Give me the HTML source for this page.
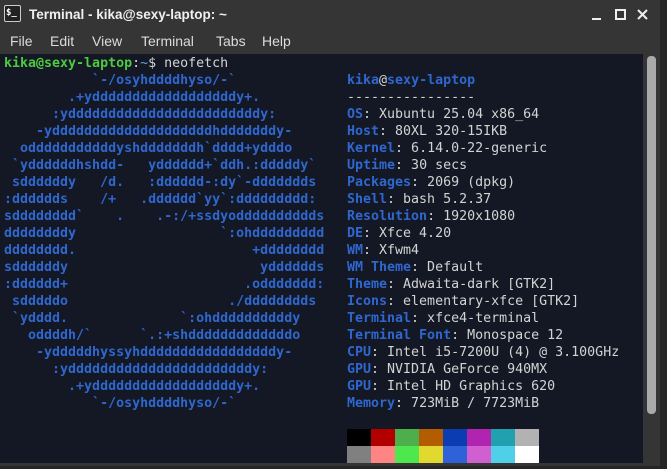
<!DOCTYPE html>
<html><head><meta charset="utf-8"><style>
*{margin:0;padding:0}
body{width:667px;height:469px;background:#353535;position:relative;overflow:hidden;font-family:"Liberation Sans",sans-serif}
#title{position:absolute;left:0;top:0;width:661px;height:30px;background:#353535}
#title .t{position:absolute;left:29px;top:7px;color:#f0f0f0;font-weight:bold;font-size:13.5px}
#icon{position:absolute;left:4px;top:5px;width:15px;height:15px;border:1px solid #ccc;border-radius:2px;background:#222;color:#fff;font:bold 9px "DejaVu Sans Mono",monospace;line-height:14px;text-indent:1px}
#menu{position:absolute;left:0;top:30px;height:24px;width:661px;background:#353535;color:#dcdcdc;font-size:14px}
#menu span{position:absolute;top:3px}
#term{position:absolute;left:0;top:54px;width:643px;height:409px;background:#131824}
pre{position:absolute;font-family:"DejaVu Sans Mono",monospace;font-size:13.3px;line-height:17px;color:#d3d3d3}
.b{color:#2f67cf;font-weight:bold}
.g{color:#4ec940;font-weight:bold}
#logo{left:4px;top:18px;color:#2f67cf;font-weight:bold}
#sb{position:absolute;left:647px;top:56px;width:9px;height:358px;background:#aaa;border-radius:4px}
#rs{position:absolute;left:660px;top:0;width:7px;height:469px;background:#262626}
#bot{position:absolute;left:0;top:466px;width:667px;height:3px;background:#262626}
.sw{position:absolute;width:24px;height:17px}
</style></head><body>
<div id="title"><div id="icon">$_</div><div class="t">Terminal - kika@sexy-laptop: ~</div>
<svg style="position:absolute;left:590px;top:8px" width="60" height="14"><rect x="2" y="10" width="9" height="2" fill="#eee"/><rect x="26" y="2" width="9" height="9" fill="none" stroke="#eee" stroke-width="2"/><path d="M48 2 L57 11 M57 2 L48 11" stroke="#eee" stroke-width="2"/></svg>
</div>
<div id="menu"><span style="left:10px">File</span><span style="left:50px">Edit</span><span style="left:92px">View</span><span style="left:141px">Terminal</span><span style="left:216px">Tabs</span><span style="left:262px">Help</span></div>
<div id="term">
<pre style="left:4px;top:1px"><span class="g">kika@sexy-laptop</span>:<span style="color:#6f9fe6">~</span>$ neofetch</pre>
<pre id="logo">           `-/osyhddddhyso/-`
        .+yddddddddddddddddddy+.
      :yddddddddddddddddddddddddy:
    -yddddddddddddddddddddhdddddddy-
  odddddddddddyshdddddddh`dddd+ydddo
 `yddddddhshdd-   ydddddd+`ddh.:dddddy`
 sddddddy   /d.   :dddddd-:dy`-ddddddds
:dddddds    /+   .dddddd`yy`:ddddddddd:
sdddddddd`    .    .-:/+ssdyodddddddddds
ddddddddy                  `:ohddddddddd
dddddddd.                      +dddddddd
sddddddy                        ydddddds
:dddddd+                      .oddddddd:
 sdddddo                    ./dddddddds
 `ydddd.              `:ohddddddddddy
   oddddh/`      `.:+shdddddddddddddo
    -ydddddhyssyhdddddddddddddddddy-
      :ydddddddddddddddddddddddy:
        .+yddddddddddddddddddy+.
           `-/osyhddddhyso/-`</pre>
<pre style="left:347px;top:18px"><span class="b">kika</span>@<span class="b">sexy-laptop</span>
----------------
<span class="b">OS</span>: Xubuntu 25.04 x86_64
<span class="b">Host</span>: 80XL 320-15IKB
<span class="b">Kernel</span>: 6.14.0-22-generic
<span class="b">Uptime</span>: 30 secs
<span class="b">Packages</span>: 2069 (dpkg)
<span class="b">Shell</span>: bash 5.2.37
<span class="b">Resolution</span>: 1920x1080
<span class="b">DE</span>: Xfce 4.20
<span class="b">WM</span>: Xfwm4
<span class="b">WM Theme</span>: Default
<span class="b">Theme</span>: Adwaita-dark [GTK2]
<span class="b">Icons</span>: elementary-xfce [GTK2]
<span class="b">Terminal</span>: xfce4-terminal
<span class="b">Terminal Font</span>: Monospace 12
<span class="b">CPU</span>: Intel i5-7200U (4) @ 3.100GHz
<span class="b">GPU</span>: NVIDIA GeForce 940MX
<span class="b">GPU</span>: Intel HD Graphics 620
<span class="b">Memory</span>: 723MiB / 7723MiB</pre>
<div class="sw" style="left:347px;top:375px;background:#000"></div>
<div class="sw" style="left:371px;top:375px;background:#b20000"></div>
<div class="sw" style="left:395px;top:375px;background:#4caf4c"></div>
<div class="sw" style="left:419px;top:375px;background:#b35c00"></div>
<div class="sw" style="left:443px;top:375px;background:#0c3db0"></div>
<div class="sw" style="left:467px;top:375px;background:#b024b0"></div>
<div class="sw" style="left:491px;top:375px;background:#21a0b0"></div>
<div class="sw" style="left:515px;top:375px;background:#b2b2b2"></div>
<div class="sw" style="left:347px;top:392px;background:#808080"></div>
<div class="sw" style="left:371px;top:392px;background:#ff8585"></div>
<div class="sw" style="left:395px;top:392px;background:#4ee84e"></div>
<div class="sw" style="left:419px;top:392px;background:#e2d92e"></div>
<div class="sw" style="left:443px;top:392px;background:#2f62d8"></div>
<div class="sw" style="left:467px;top:392px;background:#d05fd0"></div>
<div class="sw" style="left:491px;top:392px;background:#4fd0e8"></div>
<div class="sw" style="left:515px;top:392px;background:#fff"></div>
</div>
<div id="sb"></div>
<div id="rs"></div>
<div id="bot"></div>
</body></html>
